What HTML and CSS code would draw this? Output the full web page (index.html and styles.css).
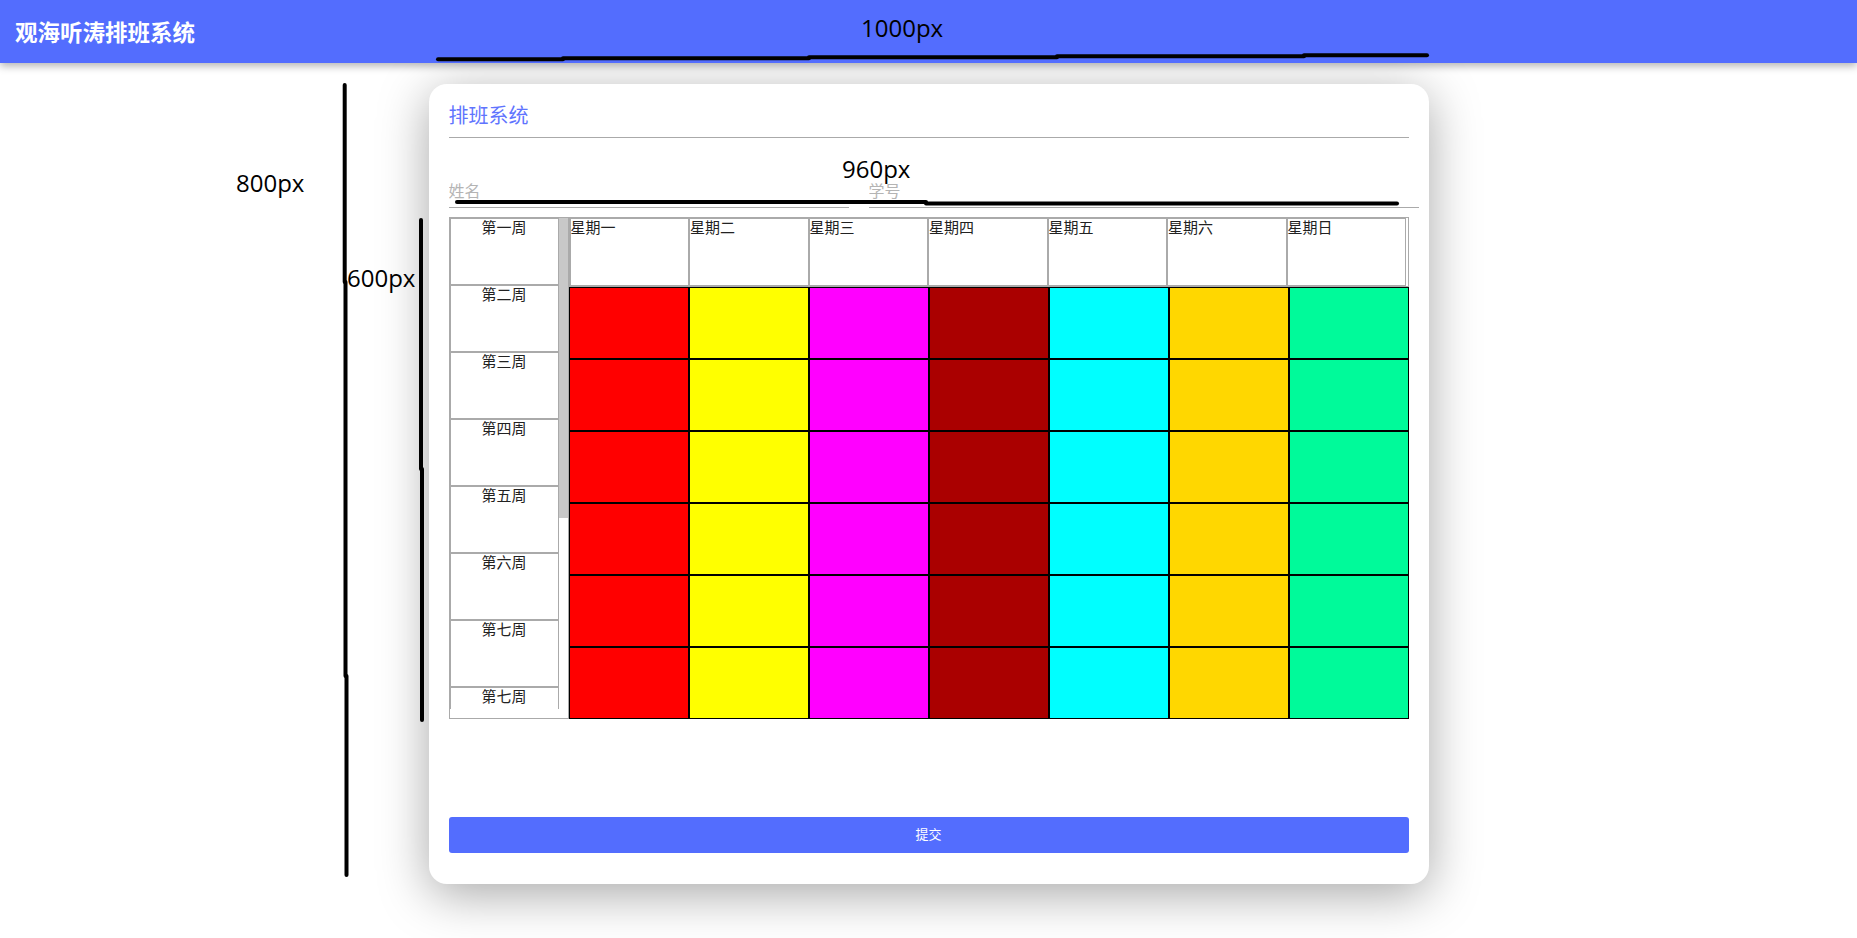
FILE: index.html
```html
<!DOCTYPE html>
<html lang="zh">
<head>
<meta charset="utf-8">
<title>观海听涛排班系统</title>
<link rel="stylesheet" href="styles.css">
</head>
<body>
<header class="topbar">
  <h1 class="brand">观海听涛排班系统</h1>
</header>

<main class="card">
  <h2 class="card-title">排班系统</h2>
  <div class="fields">
    <input class="field field-name" type="text" placeholder="姓名">
    <input class="field field-id" type="text" placeholder="学号">
  </div>

  <div class="schedule">
    <div class="weeks">
      <div class="week-list">
        <div class="week">第一周</div>
        <div class="week">第二周</div>
        <div class="week">第三周</div>
        <div class="week">第四周</div>
        <div class="week">第五周</div>
        <div class="week">第六周</div>
        <div class="week">第七周</div>
        <div class="week week-cut">第七周</div>
      </div>
      <div class="scrollbar"><div class="scroll-thumb"></div></div>
    </div>
    <div class="board">
      <div class="days">
        <div class="day">星期一</div>
        <div class="day">星期二</div>
        <div class="day">星期三</div>
        <div class="day">星期四</div>
        <div class="day">星期五</div>
        <div class="day">星期六</div>
        <div class="day">星期日</div>
      </div>
      <div class="cells">
        <div class="cell c1"></div><div class="cell c2"></div><div class="cell c3"></div><div class="cell c4"></div><div class="cell c5"></div><div class="cell c6"></div><div class="cell c7"></div>
        <div class="cell c1"></div><div class="cell c2"></div><div class="cell c3"></div><div class="cell c4"></div><div class="cell c5"></div><div class="cell c6"></div><div class="cell c7"></div>
        <div class="cell c1"></div><div class="cell c2"></div><div class="cell c3"></div><div class="cell c4"></div><div class="cell c5"></div><div class="cell c6"></div><div class="cell c7"></div>
        <div class="cell c1"></div><div class="cell c2"></div><div class="cell c3"></div><div class="cell c4"></div><div class="cell c5"></div><div class="cell c6"></div><div class="cell c7"></div>
        <div class="cell c1"></div><div class="cell c2"></div><div class="cell c3"></div><div class="cell c4"></div><div class="cell c5"></div><div class="cell c6"></div><div class="cell c7"></div>
        <div class="cell c1"></div><div class="cell c2"></div><div class="cell c3"></div><div class="cell c4"></div><div class="cell c5"></div><div class="cell c6"></div><div class="cell c7"></div>
      </div>
    </div>
  </div>

  <button class="submit" type="button">提交</button>
</main>

<div class="annotations">
  <svg class="marks" width="1857" height="938" viewBox="0 0 1857 938">
    <g stroke="#000" stroke-width="4" stroke-linecap="round" fill="none">
      <line x1="438" y1="59.3" x2="563" y2="59.3"/>
      <line x1="563" y1="58.3" x2="809" y2="58.3"/>
      <line x1="809" y1="57.3" x2="1057" y2="57.3"/>
      <line x1="1057" y1="56.3" x2="1304" y2="56.3"/>
      <line x1="1304" y1="55.3" x2="1427" y2="55.3"/>

      <line x1="344.7" y1="85" x2="344.7" y2="282"/>
      <line x1="345.5" y1="282" x2="345.5" y2="676"/>
      <line x1="346.5" y1="676" x2="346.5" y2="875"/>

      <line x1="421" y1="220" x2="421" y2="469"/>
      <line x1="422" y1="469" x2="422" y2="720"/>

      <line x1="457" y1="202" x2="926" y2="202"/>
      <line x1="926" y1="203.5" x2="1397" y2="203.5"/>
    </g>
  </svg>
  <span class="label label-1000">1000px</span>
  <span class="label label-800">800px</span>
  <span class="label label-600">600px</span>
  <span class="label label-960">960px</span>
</div>
</body>
</html>
```

FILE: styles.css
```css
* {
  box-sizing: border-box;
}

html,
body {
  margin: 0;
  padding: 0;
}

body {
  position: relative;
  min-height: 938px;
  overflow: hidden;
  background: #fff;
  color: #222;
  font-family: "Noto Sans CJK SC", "Noto Sans", sans-serif;
}

/* top bar */
.topbar {
  position: relative;
  z-index: 1;
  display: flex;
  align-items: center;
  height: 63px;
  padding-left: 15px;
  background: #536dfe;
  box-shadow: 0 3px 8px rgba(0, 0, 0, 0.3);
}

.brand {
  margin: 0;
  color: #fff;
  font-size: 22.5px;
  font-weight: 700;
  line-height: 1;
}

/* card */
.card {
  width: 1000px;
  height: 800px;
  margin: 21px auto 0;
  padding: 20px;
  background: #fff;
  border-radius: 18px;
  box-shadow: 0 10px 50px rgba(0, 0, 0, 0.35);
}

.card-title {
  margin: 0;
  padding-bottom: 11px;
  border-bottom: 1px solid #aaa;
  color: #5f74fe;
  font-size: 20px;
  font-weight: 400;
  line-height: 22px;
}

/* inputs */
.fields {
  display: flex;
  gap: 20px;
  margin-top: 42px;
}

.field {
  flex: none;
  height: 28px;
  padding: 0 0 7px;
  border: 0;
  border-bottom: 1px solid #aaa;
  border-radius: 0;
  outline: none;
  background: transparent;
  color: #222;
  font: 16px/20px "Noto Sans CJK SC", sans-serif;
}

.field::placeholder {
  color: #b4b4b4;
}

.field-name {
  width: 400px;
}

.field-id {
  width: 550px;
}

/* schedule */
.schedule {
  display: flex;
  height: 502px;
  margin-top: 9px;
}

.weeks {
  flex: none;
  display: grid;
  grid-template-columns: 1fr 9px;
  grid-template-rows: 1fr 9px;
  width: 120px;
  height: 502px;
  border: 1px solid #aaa;
}

.week-list {
  grid-row: 1;
  grid-column: 1;
  min-height: 0;
}

.scrollbar {
  grid-row: 1;
  grid-column: 2;
  background: #fff;
}

.scroll-thumb {
  height: 300px;
  background: #c8c8c8;
}

.week {
  height: 67px;
  border: 1px solid #aaa;
  color: #222;
  text-align: center;
  font-size: 15px;
  line-height: 16px;
}

/* last row, partly scrolled out of view */
.week-cut {
  height: 22px;
  border-bottom: 0;
}

.board {
  flex: none;
  width: 840px;
}

.days {
  display: flex;
  height: 70px;
  border: 1px solid #aaa;
}

.day {
  flex: none;
  width: 119.5px;
  border: 1px solid #aaa;
  color: #222;
  font-size: 15px;
  line-height: 16px;
}

.cells {
  display: grid;
  grid-template-columns: repeat(7, 1fr);
  grid-template-rows: repeat(6, 1fr);
  height: 432px;
}

.cell {
  border: 1px solid #000;
}

.c1 { background: #ff0000; }
.c2 { background: #ffff00; }
.c3 { background: #ff00ff; }
.c4 { background: #aa0000; }
.c5 { background: #00ffff; }
.c6 { background: #ffd700; }
.c7 { background: #00fa9a; }

/* submit */
.submit {
  display: block;
  width: 100%;
  height: 36px;
  margin-top: 98px;
  padding: 0 0 3px;
  border: 0;
  border-radius: 3px;
  background: #536dfe;
  color: #fff;
  font: 13px/16px "Noto Sans CJK SC", sans-serif;
}

/* hand-drawn measurement annotations lying over the page */
.annotations {
  position: absolute;
  left: 0;
  top: 0;
  z-index: 5;
  width: 1857px;
  height: 938px;
  pointer-events: none;
}

.marks {
  position: absolute;
  left: 0;
  top: 0;
}

.label {
  position: absolute;
  color: #000;
  font: 24px/24px "Open Sans", "Liberation Sans", sans-serif;
  white-space: nowrap;
}

.label-1000 {
  left: 861px;
  top: 16px;
}

.label-800 {
  left: 236px;
  top: 171px;
}

.label-600 {
  left: 347px;
  top: 266px;
}

.label-960 {
  left: 842px;
  top: 157px;
}
```
